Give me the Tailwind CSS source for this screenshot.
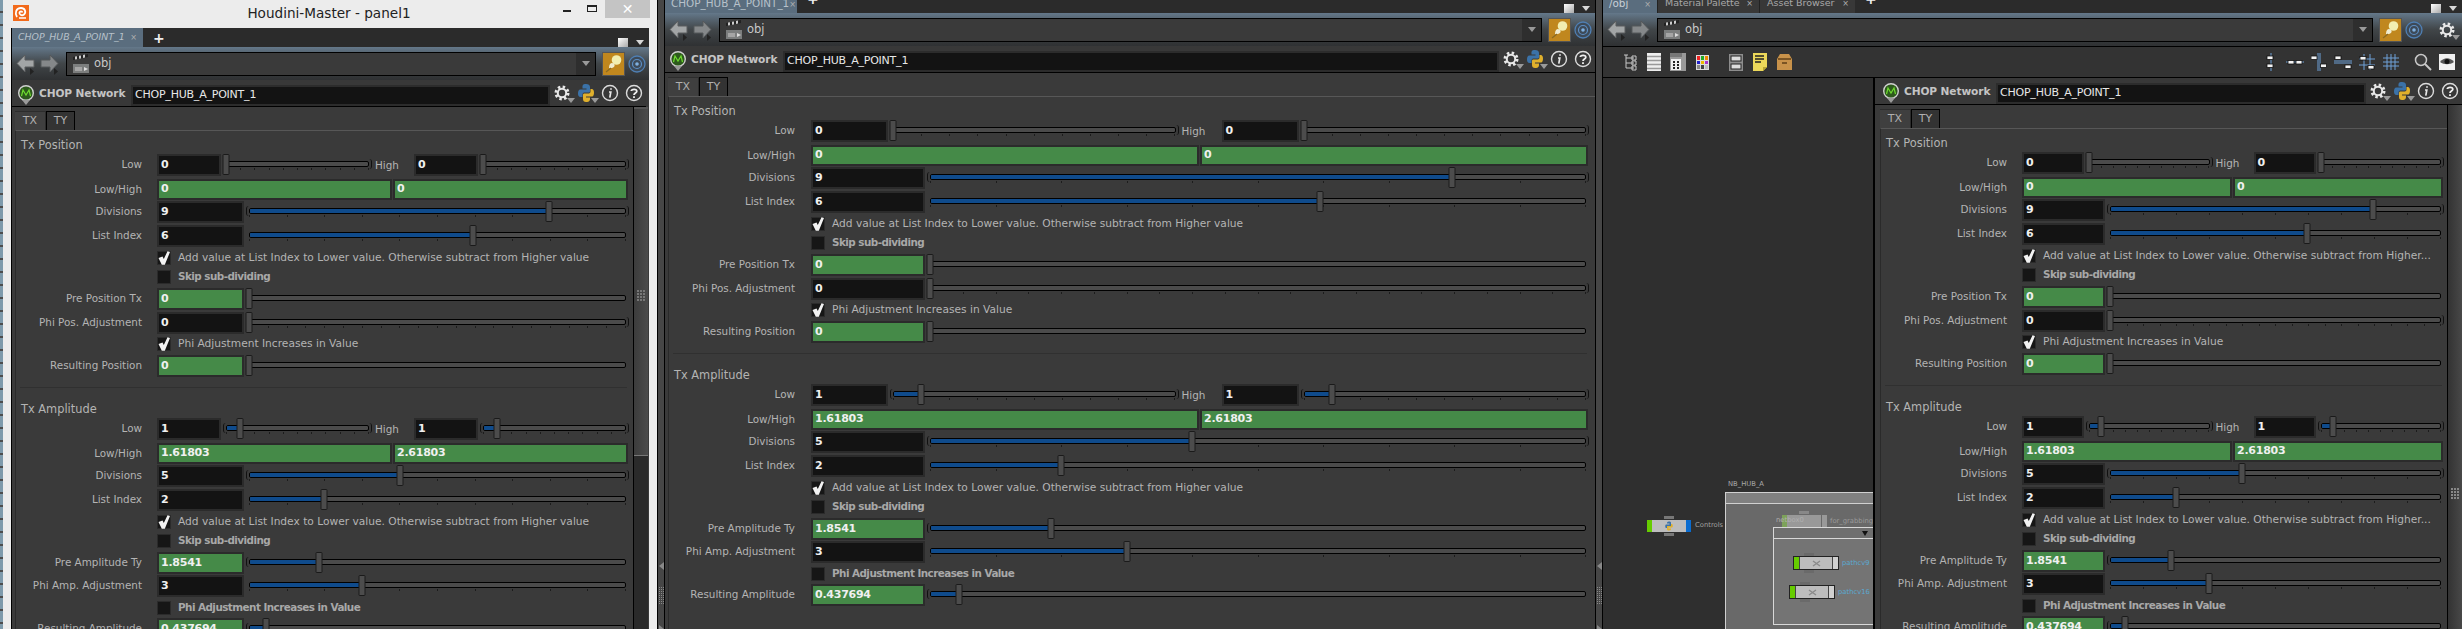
<!doctype html>
<html><head><meta charset="utf-8">
<script src="https://cdn.jsdelivr.net/npm/@tailwindcss/browser@4"></script>
</head>
<body class="m-0 overflow-hidden bg-[#2b2b2b]">
<div id="app" class="flex h-[629px] w-[2462px] overflow-hidden font-['DejaVu_Sans',sans-serif]"></div>
<script>
const gear='<svg width="18" height="18" viewBox="0 0 18 18"><circle cx="9" cy="9" r="6" fill="none" stroke="#e8e8e8" stroke-width="3" stroke-dasharray="2.4 2.3"/><circle cx="9" cy="9" r="4.2" fill="none" stroke="#e8e8e8" stroke-width="2"/></svg>';
const py='<svg width="18" height="20" viewBox="0 0 18 20"><path d="M9 1C5.5 1 5.5 2.5 5.5 4V5.5H9.5V6.5H3.5C1.5 6.5 1 8.5 1 10.5S1.8 14 3.5 14H5.5V11.5C5.5 10 6.5 9.5 8 9.5H11.5C12.5 9.5 13 9 13 8V4C13 2 11.5 1 9 1Z" fill="#3b72a8"/><path d="M9 19C12.5 19 13 17.5 13 16V14.5H9V13.5H15C16.5 13.5 17 11.5 17 9.5S16.2 6 14.8 6H13.5V8.5C13.5 10 12.5 10.5 11 10.5H7.5C6.5 10.5 6 11 6 12V16C6 18 7 19 9 19Z" fill="#e0b02c"/></svg>';
const infoI='<svg width="18" height="18" viewBox="0 0 18 18"><circle cx="9" cy="9" r="7.5" fill="none" stroke="#dcdcdc" stroke-width="1.4"/><path d="M10 4.2v1.6M8 8h1.8L8.8 13.6" fill="none" stroke="#e8e8e8" stroke-width="1.7"/></svg>';
const helpI='<svg width="18" height="18" viewBox="0 0 18 18"><circle cx="9" cy="9" r="7.5" fill="none" stroke="#dcdcdc" stroke-width="1.4"/><path d="M6.3 7C6.5 5 11.8 4.6 11.8 7.2C11.8 9 9 9 9 11" fill="none" stroke="#f0f0f0" stroke-width="1.8"/><path d="M9 12.2v1.8" stroke="#f0f0f0" stroke-width="1.8"/></svg>';
const tri='<svg width="8" height="5" viewBox="0 0 8 5"><path d="M0 0H8L4 5Z" fill="#9a9a9a"/></svg>';
const arrowL='<svg width="20" height="22" viewBox="0 0 20 22"><path d="M14 22L18 18.500L14 15Z" fill="#222"/><path d="M9 2V7H18V14H9V19L1 10.500Z" fill="#a2a5a6" stroke="#5a5c5e"/></svg>';
const arrowR='<svg width="20" height="22" viewBox="0 0 20 22"><path d="M14 22L18 18.500L14 15Z" fill="#222"/><path d="M10 2V7H1V14H10V19L18 10.500Z" fill="#85888a" stroke="#55585a"/></svg>';
const clap='<svg width="18" height="20" viewBox="0 0 18 20"><rect x="1" y="7" width="16" height="12" fill="#7c7e7e"/><path d="M1 3L16 0V3L1 6Z" fill="#222"/><path d="M3 2.600L5 2.200V5.200L3 5.600ZM7 1.800L9 1.400V4.400L7 4.800ZM11 1L13 .6V3.600L11 4Z" fill="#ccc"/><rect x="1" y="7" width="16" height="3" fill="#3a3a3a"/><rect x="3" y="13" width="7" height="4" fill="#a5a5a5"/><path d="M12 13L16 15L12 17Z" fill="#ddd"/></svg>';
const pin='<svg width="18" height="20" viewBox="0 0 18 20"><circle cx="11.500" cy="6" r="4.800" fill="#f2eeb0"/><path d="M4 14C4 9 7 8 9 10C11 12 8 15 4 14Z" fill="#f0ecd0"/><path d="M1 18L6 14" stroke="#8a6a20" stroke-width="1.300"/></svg>';
const target='<svg width="18" height="18" viewBox="0 0 18 18"><circle cx="9" cy="9" r="8" fill="#3d4a58" stroke="#4f7fb3" stroke-width="1.300"/><circle cx="9" cy="9" r="4.500" fill="none" stroke="#5d8fc5" stroke-width="1.200"/><circle cx="9" cy="9" r="1.800" fill="#7fb0e0"/></svg>';
const chopI='<svg width="16" height="18" viewBox="0 0 16 18"><circle cx="8" cy="9" r="7.300" fill="#2d5a1c" stroke="#d0d0d0" stroke-width="1.400"/><path d="M3.500 12L5 6L8 11L11 6L12.500 12" fill="none" stroke="#6fdc30" stroke-width="1.200"/></svg>';
const check='<svg width="12" height="14" viewBox="0 0 12 14"><path d="M.5 7L4.500 5.500L5.800 8L9.500 .2L12 1L6.800 13.800H3.800Z" fill="#f2f2f2"/></svg>';

function nameRow(cls){
 return '<div class="flex h-[27px] shrink-0 items-center border-b border-black bg-[#383838] '+cls+'">'+
 '<div class="relative flex w-[26px] shrink-0 justify-center">'+chopI+'<span class="absolute left-[9px] top-[16px]">'+tri+'</span></div>'+
 '<span class="w-[92px] shrink-0 whitespace-nowrap pt-[2px] text-[10.600px] font-bold tracking-[-.1px] text-[#c4c4c4]">CHOP Network</span>'+
 '<div class="flex h-[21px] min-w-0 flex-1 items-center self-end border-2 border-[#2c2c2c] bg-[#131313] pl-[2px] font-[\'DejaVu_Sans_Mono\',monospace] text-[11px] tracking-[-.22px] text-[#e8e8e8]">CHOP_HUB_A_POINT_1</div>'+
 '<div class="flex w-[24px] shrink-0 justify-center relative">'+gear+'<span class="absolute right-[-1px] top-[14px]">'+tri+'</span></div>'+
 '<div class="flex w-[24px] shrink-0 justify-center relative">'+py+'<span class="absolute right-[-1px] top-[15px]">'+tri+'</span></div>'+
 '<div class="flex w-[24px] shrink-0 justify-center">'+infoI+'</div>'+
 '<div class="flex w-[24px] shrink-0 justify-center">'+helpI+'</div></div>';
}
function pathBar(extra){
 return '<div class="flex h-[33px] shrink-0 items-center bg-gradient-to-b from-[#64788a] via-[#414649] to-[#2f3133]">'+
 '<div class="flex w-[54px] shrink-0 items-center gap-[4px] pl-[4px]">'+arrowL+arrowR+'</div>'+
 '<div class="flex h-[24px] min-w-0 flex-1 items-center border border-black bg-[#3a3a3a]"><span class="ml-[5px]">'+clap+'</span><span class="ml-[4px] text-[11.500px] text-[#c8c8c8]">obj</span><span class="ml-auto flex h-full w-[19px] items-center justify-center bg-[#2e2e2e]">'+tri+'</span></div>'+
 '<div class="ml-[6px] flex h-[24px] w-[23px] shrink-0 items-center justify-center border border-[#555] bg-[#c0871e]">'+pin+'</div>'+
 '<div class="flex w-[24px] shrink-0 justify-center">'+target+'</div>'+extra+'</div>';
}
function field(w,v,green){
 return '<div class="flex h-full shrink-0 items-center border-2 border-[#2b2b2b] pl-[2px] font-[\'DejaVu_Sans_Mono\',monospace] text-[11px] font-bold tracking-[-.25px] text-[#f0f0f0] '+(green?'bg-[#458a48]':'bg-[#131313]')+'" style="width:'+w+'">'+v+'</div>';
}
function ticks(n){
 if(!n)return '';
 let s='<div class="absolute left-0 right-0 top-[14px] flex justify-between">';
 for(let i=0;i<n;i++)s+='<span class="h-[2px] w-px bg-[#1c1c1c]"></span>';
 return s+'</div>';
}
function slider(f,n,l,r,ml){
 return '<div class="relative h-full min-w-0 flex-1 '+(ml?'ml-[5px] mr-[1px]':'')+'">'+
 '<div class="absolute left-0 right-0 top-[7px] h-[6px] overflow-hidden rounded-[2px] border border-black bg-[#4b4b4b]"><div class="h-full bg-[#0f4b8c]" style="width:'+(f*100)+'%"></div></div>'+
 ticks(n)+
 (l?'<span class="absolute left-[-3px] top-[5px] h-[10px] w-[3px] rounded-l-full border-l border-[#111]"></span>':'')+
 (r?'<span class="absolute right-[-3px] top-[5px] h-[10px] w-[3px] rounded-r-full border-r border-[#111]"></span>':'')+
 '<div class="absolute top-0 h-[21px] w-[7px] -translate-x-1/2 rounded-[1px] border border-[#1a1a1a] bg-[#4c4c4c]" style="left:'+(f*100)+'%"></div></div>';
}
function label(P,t){
 return '<div class="shrink-0 text-right text-[10.400px] whitespace-nowrap text-[#b4b4b4]" style="width:'+P.lab+'px">'+t+'</div>';
}
function row(P,mt,t,inner,h){
 return '<div class="flex items-center '+mt+' '+h+'">'+label(P,t)+'<div class="flex h-full min-w-0 flex-1 items-start" style="margin-left:'+P.gap+'px;margin-right:'+P.mr+'px">'+inner+'</div></div>';
}
function lowRow(P,mt,v,f){
 return row(P,mt,'Low',field(P.low+'px',v)+slider(f,11,f>0,true,true)+
 '<span class="shrink-0 pl-[5px] text-[10.400px] leading-[22px] text-[#b4b4b4]" style="width:'+P.high+'px">High</span>'+
 field(P.low+'px',v)+slider(f,11,f>0,true,true),'h-[22px]');
}
function lhRow(P,mt,a,b){
 return row(P,mt,'Low/High','<div class="flex h-full flex-1 gap-[1px]">'+field('50%',a,1)+field('50%',b,1)+'</div>','h-[21px]');
}
function numRow(P,mt,t,v,f,n,green,l,r){
 return row(P,mt,t,field(P.short+'px',v,green)+slider(f,n,l,r,true),'h-[22px]');
}
function cb(P,mt,on,t){
 return '<div class="flex h-[14px] items-center '+mt+'" style="padding-left:'+(P.lab+P.gap)+'px"><span class="flex h-[14px] w-[14px] shrink-0 items-center justify-center border border-[#2b2b2b] bg-[#161616]">'+(on?check:'')+'</span>'+
 (on?'<span class="ml-[7px] whitespace-nowrap text-[10.650px] text-[#b4b4b4]">'+t+'</span>':'<span class="ml-[7px] whitespace-nowrap text-[10.400px] font-bold tracking-[-.55px] text-[#a8a8a8]">'+t+'</span>')+'</div>';
}
function params(P){
 const add=P.add;
 return '<div class="flex h-[19px] shrink-0 items-end"><div class="flex h-[19px] w-[31px] items-center justify-center border-t border-r border-[#2c2c2c] bg-[#3f3f3f] text-[11px] text-[#b0b0b0]">TX</div><div class="flex h-[19px] w-[29px] items-center justify-center border border-b-0 border-black bg-[#333] text-[11px] text-[#b0b0b0]">TY</div></div>'+
 '<div class="min-w-0 flex-1 border-l border-t border-l-[#2a2a2a] border-t-[#575757] bg-[#3a3a3a] pt-[7px]">'+
 '<div class="h-[14px] pl-[5px] text-[11.400px] leading-[14px] text-[#b4b4b4]">Tx Position</div>'+
 lowRow(P,'mt-[2px]','0',0)+lhRow(P,'mt-[3px]','0','0')+numRow(P,'mt-[1px]','Divisions','9',.795,11,0,1,1)+numRow(P,'mt-[2px]','List Index','6',.595,11)+
 cb(P,'mt-[4px]',1,add)+cb(P,'mt-[5px]',0,'Skip sub-dividing')+
 numRow(P,'mt-[4px]','Pre Position Tx','0',0,0,1)+numRow(P,'mt-[2px]','Phi Pos. Adjustment','0',0,21,0,0,1)+
 cb(P,'mt-[3px]',1,'Phi Adjustment Increases in Value')+numRow(P,'mt-[4px]','Resulting Position','0',0,0,1)+
 '<div class="ml-[4px] mt-[10px] h-px bg-[#303030]" style="margin-right:'+P.mr+'px"></div>'+
 '<div class="mt-[14px] h-[14px] pl-[5px] text-[11.400px] leading-[14px] text-[#b4b4b4]">Tx Amplitude</div>'+
 lowRow(P,'mt-[2px]','1',.1)+lhRow(P,'mt-[3px]','1.61803','2.61803')+numRow(P,'mt-[1px]','Divisions','5',.4,11,0,1,1)+numRow(P,'mt-[2px]','List Index','2',.2,11)+
 cb(P,'mt-[4px]',1,add)+cb(P,'mt-[5px]',0,'Skip sub-dividing')+
 numRow(P,'mt-[4px]','Pre Amplitude Ty','1.8541',.185,0,1,1,0)+numRow(P,'mt-[1px]','Phi Amp. Adjustment','3',.3,11)+
 cb(P,'mt-[4px]',0,'Phi Adjustment Increases in Value')+numRow(P,'mt-[3px]','Resulting Amplitude','0.437694',.044,0,1,1,0)+
 '</div>';
}
const closeX='<span class="text-[8px] leading-none text-[#b0b0b0]">×</span>';
function tabRight(){return '<div class="ml-auto flex items-center gap-[8px] pr-[5px]"><span class="h-[9px] w-[10px] bg-gradient-to-br from-white to-[#aaa]"></span><svg width="8" height="5" viewBox="0 0 8 5"><path d="M0 0H8L4 5Z" fill="#d8d8d8"/></svg></div>';}
const plus='<span class="mx-[10px] text-[14px] font-bold leading-none text-[#eee]">+</span>';
const addFull='Add value at List Index to Lower value. Otherwise subtract from Higher value';
const P1={lab:126,gap:15,mr:6,low:64,high:44,short:87,add:addFull};
const P2={lab:126,gap:16,mr:8,low:77,high:45,short:114,add:addFull};
const P3={lab:126,gap:15,mr:5,low:62,high:43,short:83,add:'Add value at List Index to Lower value. Otherwise subtract from Higher...'};

function splitter(w){
 return '<div class="relative shrink-0 border-x border-black bg-[#464646]" style="width:'+w+'px"><svg class="absolute left-[1px] top-[562px]" width="5" height="8" viewBox="0 0 5 8"><path d="M5 0V8L0 4Z" fill="#888"/></svg><div class="absolute left-[1px] top-[587px] grid grid-cols-3 gap-[1px]">'+'<span class="h-[1px] w-[1px] bg-[#888]"></span>'.repeat(27)+'</div><svg class="absolute left-[1px] bottom-0" width="5" height="4" viewBox="0 0 5 4"><path d="M0 0V4H5Z" fill="#888"/></svg></div>';
}
let html='';
/* desktop edge */
html+='<div class="w-[3px] shrink-0 bg-[repeating-linear-gradient(180deg,#7e9aab_0,#7e9aab_11px,#4d4d4d_11px,#4d4d4d_13px)]"></div>';
/* window 1 */
html+='<div class="flex w-[654px] shrink-0 flex-col bg-[#ececec]">'+
'<div class="relative flex h-[28px] shrink-0 items-start">'+
'<svg class="ml-[10px] mt-[5px]" width="16" height="16" viewBox="0 0 16 16"><rect width="16" height="16" fill="#f26a1b"/><path d="M4 12C1.500 8 3 3 8 3C12 3 13.500 7 11 9.500C9 11 6 10 6.500 7.500C7 6 9 6 9.500 7.500" fill="none" stroke="#fff" stroke-width="1.800"/><path d="M6 13H13" stroke="#fff" stroke-width="1.500"/></svg>'+
'<div class="absolute left-0 right-[2px] top-[1px] text-center font-[\'Open_Sans\',sans-serif] text-[13.600px] leading-[24px] text-[#222]">Houdini-Master - panel1</div>'+
'<div class="absolute right-[7px] top-0 flex h-[18px] items-start"><span class="mr-[16px] mt-[10px] h-[2px] w-[8px] bg-[#222]"></span><span class="mr-[8px] mt-[5px] h-[7px] w-[10px] border border-t-2 border-[#222]"></span><span class="flex h-[18px] w-[45px] items-center justify-center bg-[#c4c4c4] text-[14px] text-white">✕</span></div></div>'+
'<div class="mx-[8px] flex min-h-0 flex-1 flex-col border-l border-black bg-[#3a3a3a]">'+
'<div class="flex h-[19px] shrink-0 items-end bg-[#2b2b2b]"><div class="flex h-[19px] w-[131px] items-center bg-[#5a6d7e] pl-[6px] text-[9.400px] italic text-[#b7c1ca]">CHOP_HUB_A_POINT_1<span class="ml-auto mr-[6px]">'+closeX+'</span></div><span class="self-center">'+plus+'</span>'+tabRight()+'</div>'+
pathBar('')+
'<div class="flex min-h-0 flex-1"><div class="flex min-w-0 flex-1 flex-col pl-[3px]">'+nameRow('-mr-[13px] -ml-[3px] pl-[1px] relative')+'<div class="h-[4px] shrink-0"></div>'+params(P1)+'</div>'+
'<div class="relative mt-[27px] w-[15px] shrink-0 border-l border-black bg-[#2a2a2a]"><div class="h-[349px] border-t-2 border-b border-t-[#555] border-b-[#777] bg-gradient-to-r from-[#3c3c3c] to-[#4b4b4b]"></div><div class="absolute left-[3px] top-[183px] grid grid-cols-3 gap-[1px]">'+'<span class="h-[2px] w-[2px] bg-[#777]"></span>'.repeat(12)+'</div></div><div class="w-[1px] shrink-0 bg-[#3a3a3a]"></div></div>'+
'</div></div>';
html+=splitter(8);
/* panel 2 */
html+='<div class="flex w-[930px] shrink-0 flex-col bg-[#3a3a3a]">'+
'<div class="flex h-[13px] shrink-0 items-end overflow-hidden bg-[#2b2b2b]"><div class="flex h-[19px] w-[132px] shrink-0 items-center bg-[#5a6d7e] pl-[6px] text-[10.400px] text-[#b7c1ca]">CHOP_HUB_A_POINT_1<span class="ml-auto mr-[6px]">'+closeX+'</span></div><span class="mb-[2px]">'+plus+'</span>'+tabRight()+'</div>'+
pathBar('')+
nameRow('')+'<div class="h-[4px] shrink-0 bg-[#3a3a3a]"></div><div class="flex min-h-0 flex-1 flex-col pl-[3px]">'+params(P2)+'</div></div>';
html+=splitter(8);
/* panel 3 */
function tool(svg){return '<span class="flex h-[20px] w-[24px] items-center justify-center">'+svg+'</span>';}
const tbL=[
'<svg width="14" height="18" viewBox="0 0 14 18"><path d="M3 2V15M3 5H11M3 10H11M3 15H11" fill="none" stroke="#c8c8c8"/><path d="M1 2H5M9 3V7H13V3ZM9 8V12H13V8ZM9 13V17H13V13Z" fill="none" stroke="#c8c8c8"/></svg>',
'<svg width="14" height="18" viewBox="0 0 14 18"><rect width="14" height="18" fill="#eee"/><path d="M0 3.500H14M0 7.500H14M0 11.500H14M0 15.500H14" stroke="#999" stroke-width="1.500"/></svg>',
'<svg width="16" height="18" viewBox="0 0 16 18"><rect width="16" height="18" fill="#999"/><rect width="12" height="4" y="0" fill="#777"/><rect x="1" y="6" width="10" height="11" fill="#eee"/><path d="M3 8h2v2H3zM7 8h2v2H7zM3 11h2v2H3zM7 11h2v2H7zM3 14h2v2H3zM7 14h2v2H7z" fill="#222"/></svg>',
'<svg width="13" height="15" viewBox="0 0 13 15"><rect width="13" height="15" fill="#ddd"/><rect x="1" y="1" width="3" height="4" fill="#e22"/><rect x="5" y="1" width="3" height="4" fill="#2a2"/><rect x="9" y="1" width="3" height="4" fill="#e80"/><rect x="1" y="6" width="3" height="3" fill="#22c"/><rect x="5" y="6" width="3" height="3" fill="#eb0"/><rect x="9" y="6" width="3" height="3" fill="#a3c"/><rect x="1" y="10" width="3" height="4" fill="#888"/><rect x="5" y="10" width="3" height="4" fill="#444"/><rect x="9" y="10" width="3" height="4" fill="#bbb"/></svg>'];
const tbM=[
'<svg width="14" height="17" viewBox="0 0 14 17"><rect width="14" height="17" fill="#8d8d8d"/><rect x="2" y="2" width="10" height="5" fill="#ddd" stroke="#222"/><rect x="2" y="10" width="10" height="5" fill="#ddd" stroke="#222"/></svg>',
'<svg width="14" height="18" viewBox="0 0 14 18"><path d="M0 0H14V14L10 18H0Z" fill="#ecd85a"/><path d="M2 3H11M2 6H11M2 9H8" stroke="#222" stroke-width="1.300"/><path d="M14 14L10 18V14Z" fill="#b8a530"/></svg>',
'<svg width="15" height="16" viewBox="0 0 15 16"><path d="M3 0H12L15 5V16H0V5Z" fill="#c8924a"/><rect x="1" y="4" width="13" height="2" fill="#7a5424"/><rect x="5" y="8" width="5" height="2" fill="#7a5424"/></svg>'];
function box(x,y){return '<rect x="'+x+'" y="'+y+'" width="6" height="3.500" fill="#f4f4f4" stroke="#111" stroke-width=".8"/>';}
const bl='#6ea1d8';
const tbR=[
'<svg width="14" height="18" viewBox="0 0 14 18"><path d="M7 0V18" stroke="'+bl+'"/>'+box(3,3)+box(3,11)+'</svg>',
'<svg width="18" height="8" viewBox="0 0 18 8"><path d="M0 4H18" stroke="'+bl+'"/>'+box(2,2.500)+box(10,2.500)+'</svg>',
'<svg width="16" height="18" viewBox="0 0 16 18"><path d="M7 0V18M9 0V18" stroke="'+bl+'"/>'+box(0,3)+box(9.500,11)+'</svg>',
'<svg width="18" height="14" viewBox="0 0 18 14"><path d="M0 6H18M0 8H18" stroke="'+bl+'"/>'+box(1,1)+box(11,10)+'</svg>',
'<svg width="16" height="16" viewBox="0 0 16 16"><path d="M0 5H16M0 11H16M5 0V16M11 0V16" stroke="'+bl+'"/>'+box(1,2.500)+box(9,11.500)+'</svg>',
'<svg width="16" height="16" viewBox="0 0 16 16"><path d="M0 4H16M0 8H16M0 12H16M4 0V16M8 0V16M12 0V16" stroke="'+bl+'"/></svg>'];
const eye='<svg width="16" height="16" viewBox="0 0 16 16"><rect width="16" height="16" fill="#f0f0f0"/><path d="M1 8C5 3 11 3 15 8C11 11 5 11 1 8Z" fill="#555"/><circle cx="8" cy="7.500" r="2.500" fill="#111"/></svg>';
const lens='<svg width="18" height="18" viewBox="0 0 18 18"><circle cx="7" cy="7" r="5.500" fill="#3d3d3d" stroke="#c8c8c8" stroke-width="1.500"/><path d="M11 11L17 17" stroke="#c8c8c8" stroke-width="2"/></svg>';
const mini='<svg width="9" height="7" viewBox="0 0 9 7"><path d="M1 1L8 6M1 6L8 1" stroke="#8a8a8a" stroke-width="1.400"/></svg>';
const net=
'<div class="relative min-w-0 flex-1 overflow-hidden bg-[#2f2f2f]">'+
/* Controls node */
'<div class="absolute left-[44px] top-[442px] flex h-[12px] w-[44px]"><span class="w-[5px] bg-[#66cc00]"></span><span class="flex flex-1 items-center justify-center bg-[#bdbdbd]"><svg width="10" height="10" viewBox="0 0 18 20"><path d="M9 1C5 1 5 3 5 5H10V7H3C1 7 1 14 3 14H5V10H13V3C13 2 11 1 9 1Z" fill="#3b72a8"/><path d="M9 19C13 19 13 17 13 15H8V13H15C17 13 17 6 15 6H13V10H5V16C5 18 7 19 9 19Z" fill="#e0b02c"/></svg></span><span class="w-[5px] bg-[#0a6cd0]"></span></div>'+
'<span class="absolute left-[61px] top-[438px] h-[3px] w-[10px] bg-[#777]"></span><span class="absolute left-[61px] top-[455px] h-[3px] w-[10px] bg-[#777]"></span>'+
'<span class="absolute left-[92px] top-[442px] text-[6.800px] leading-[11px] text-[#a0a0a0]">Controls</span>'+
/* outer netbox */
'<span class="absolute left-[125px] top-[402px] text-[6.800px] leading-[9px] text-[#a8a8a8]">NB_HUB_A</span>'+
'<div class="absolute left-[122px] top-[414px] h-[240px] w-[160px] border border-[#d0d0d0] bg-[#696969]"><div class="h-[11px] border-b border-[#d0d0d0] bg-[#808080]"></div></div>'+
'<span class="absolute left-[179px] top-[437px] h-[12px] w-[5px] bg-[#7da25a]"></span><span class="absolute left-[184px] top-[437px] h-[12px] w-[34px] bg-[#999]"></span><span class="absolute left-[219px] top-[437px] h-[12px] w-[5px] bg-[#999]"></span><span class="absolute left-[196px] top-[433px] h-[3px] w-[10px] bg-[#888]"></span>'+
'<span class="absolute left-[173px] top-[437px] text-[6.800px] leading-[11px] text-[#b0b0b0]">netbox0</span>'+
'<span class="absolute left-[227px] top-[438px] whitespace-nowrap text-[6.800px] leading-[11px] text-[#9a9a9a]">for_grabbing</span>'+
/* inner netbox */
'<div class="absolute left-[170px] top-[449px] h-[98px] w-[120px] border border-[#d8d8d8] bg-[#747474]"><div class="h-[11px] border-b border-[#d8d8d8] bg-[#6f6f6f]"></div></div>'+
'<span class="absolute left-[259px] top-[453px] h-0 w-0 border-x-[3px] border-t-[5px] border-x-transparent border-t-[#111]"></span>'+
/* pathcv9 */
'<span class="absolute left-[201px] top-[475px] h-[3px] w-[10px] bg-[#6a6a6a]"></span><span class="absolute left-[201px] top-[492px] h-[3px] w-[10px] bg-[#6a6a6a]"></span>'+
'<div class="absolute left-[190px] top-[478px] flex h-[14px] w-[46px] border border-[#222]"><span class="w-[5px] bg-[#66cc00]"></span><span class="flex flex-1 items-center justify-center border-l border-[#444] bg-[#bdbdbd]">'+mini+'</span><span class="w-[6px] border-l border-[#444] bg-[#d0d0d0]"></span></div>'+
'<span class="absolute left-[239px] top-[480px] text-[6.800px] leading-[10px] text-[#5aa9d2]">pathcv9</span>'+
'<span class="absolute left-[197px] top-[504px] h-[3px] w-[10px] bg-[#6a6a6a]"></span><span class="absolute left-[197px] top-[521px] h-[3px] w-[10px] bg-[#6a6a6a]"></span>'+
'<div class="absolute left-[186px] top-[507px] flex h-[14px] w-[46px] border border-[#222]"><span class="w-[5px] bg-[#66cc00]"></span><span class="flex flex-1 items-center justify-center border-l border-[#444] bg-[#bdbdbd]">'+mini+'</span><span class="w-[6px] border-l border-[#444] bg-[#d0d0d0]"></span></div>'+
'<span class="absolute left-[235px] top-[509px] text-[6.800px] leading-[10px] text-[#5aa9d2]">pathcv16</span>'+
'</div>';
html+='<div class="flex min-w-0 flex-1 flex-col bg-[#3a3a3a]">'+
'<div class="flex h-[13px] shrink-0 items-end overflow-hidden bg-[#2b2b2b]">'+
'<div class="flex h-[19px] w-[54px] shrink-0 items-center bg-[#5a6d7e] pl-[6px] text-[10.400px] text-[#c8d0d8]">/obj<span class="ml-auto mr-[6px]">'+closeX+'</span></div>'+
'<div class="flex h-[19px] w-[102px] shrink-0 items-center border-l border-[#222] bg-[#383838] pl-[7px] text-[9.500px] text-[#a8a8a8]">Material Palette<span class="ml-auto mr-[6px]">'+closeX+'</span></div>'+
'<div class="flex h-[19px] w-[96px] shrink-0 items-center border-l border-[#222] bg-[#383838] pl-[7px] text-[9.500px] text-[#a8a8a8]">Asset Browser<span class="ml-auto mr-[6px]">'+closeX+'</span></div>'+
'<span class="mb-[2px]">'+plus+'</span>'+tabRight()+'</div>'+
pathBar('<div class="flex w-[36px] shrink-0 justify-start pl-[12px]"><span class="relative">'+gear+'<span class="absolute right-[-4px] top-[14px]">'+tri+'</span></span></div>')+
'<div class="flex h-[32px] shrink-0 items-center border-y border-black bg-[#333] pl-[15px]"><div class="flex">'+tbL.map(tool).join('')+'</div><div class="ml-[10px] flex">'+tbM.map(tool).join('')+'</div><div class="ml-auto flex pr-[3px]">'+tbR.map(tool).join('')+'<span class="w-[8px]"></span>'+tool(lens)+tool(eye)+'</div></div>'+
'<div class="flex min-h-0 flex-1">'+net+
'<div class="flex w-[589px] shrink-0 flex-col border-l-2 border-black">'+nameRow('pl-[3px]')+'<div class="flex min-h-0 flex-1"><div class="flex min-w-0 flex-1 flex-col pl-[5px] pt-[4px]">'+params(P3)+'</div>'+
'<div class="relative w-[15px] shrink-0 border-l border-black bg-gradient-to-r from-[#333] to-[#484848]"><div class="absolute left-[3px] top-[383px] grid grid-cols-3 gap-[1px]">'+'<span class="h-[2px] w-[2px] bg-[#888]"></span>'.repeat(12)+'</div></div></div></div></div></div>';
document.getElementById('app').innerHTML=html;
</script>
</body></html>
